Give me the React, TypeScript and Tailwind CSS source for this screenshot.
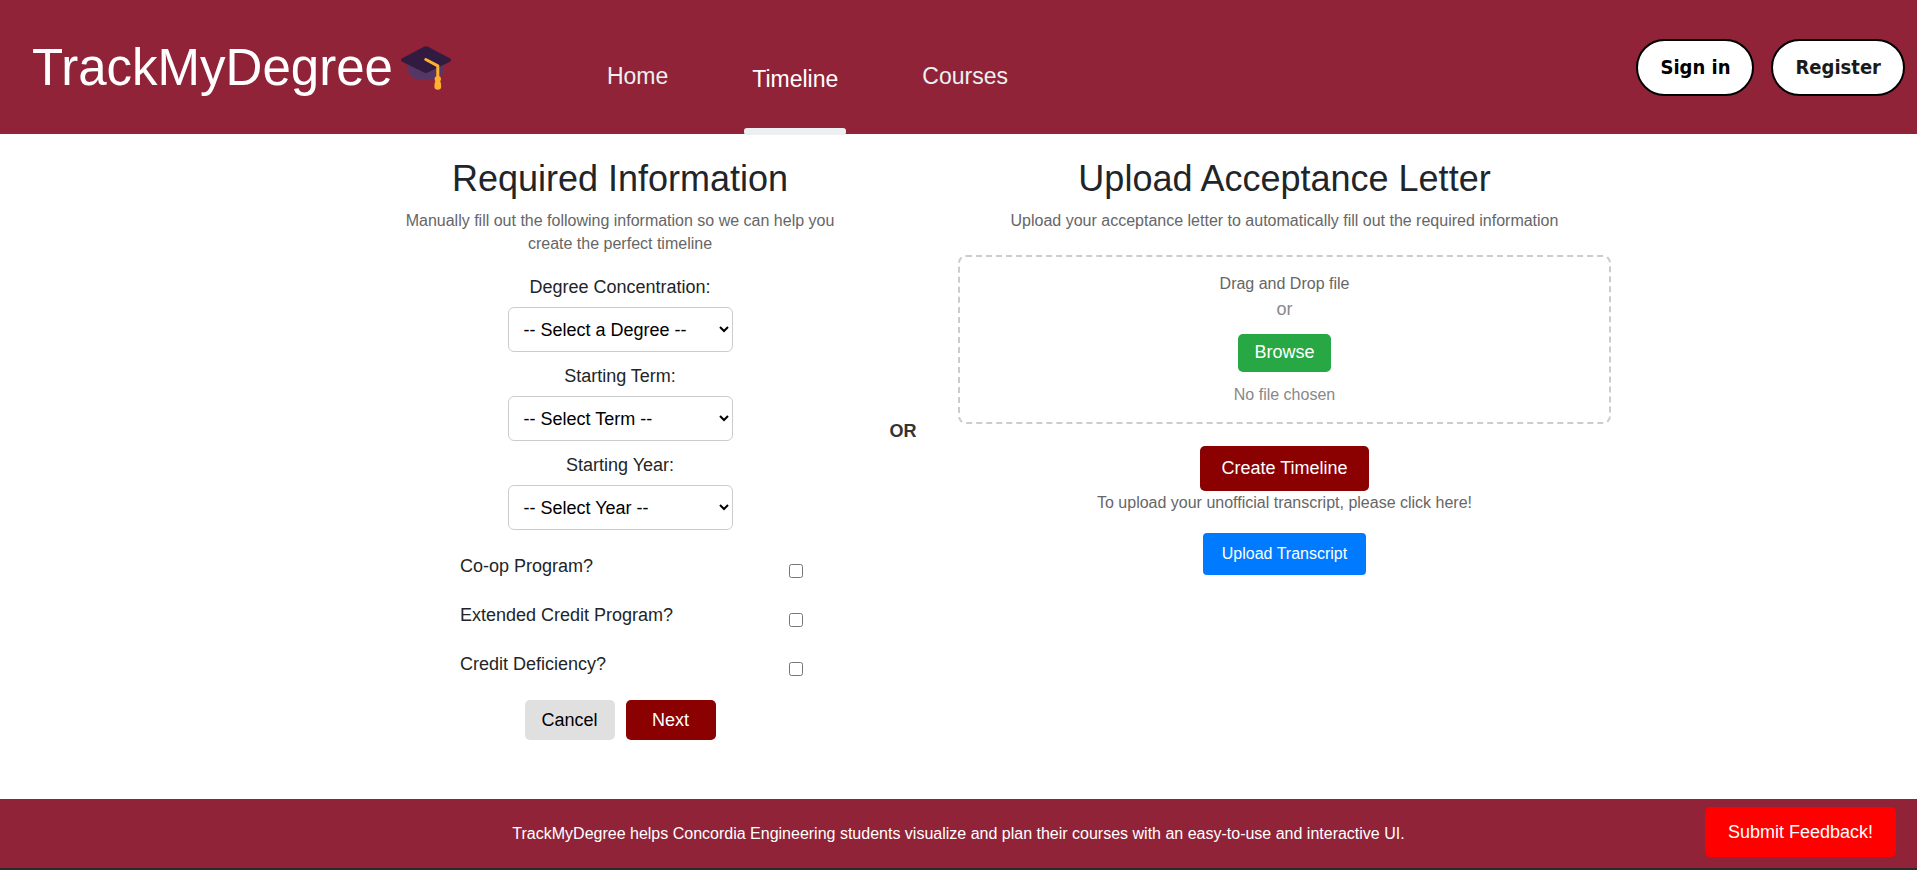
import { useRef, useState } from "react";

function GraduationCap() {
  return (
    <svg viewBox="0 0 50 44" className="mt-0.5 h-11 w-[50px]" aria-hidden="true">
      <path d="M7 17h36v5c0 6-4 11-11 11H18C11 33 7 28 7 22z" fill="#553766" />
      <path
        d="M23 .8a5 5 0 0 1 4 0l21.8 11.5c1.6.9 1.6 2.5 0 3.4L27 26.6a5 5 0 0 1-4 0L1.200 15.700c-1.600-.9-1.600-2.500 0-3.400z"
        fill="#321B41"
      />
      <path
        d="M24.800 13.500 36.800 19.800V33"
        fill="none"
        stroke="#FFB02E"
        strokeWidth="3"
        strokeLinecap="round"
        strokeLinejoin="round"
      />
      <path
        d="M36.800 30c2 0 3.200 1.200 3.200 3 0 1-.3 1.700-.8 2.300.7 1.300 1 3.200 1 5.200 0 2.200-1.200 3.300-3.400 3.300s-3.400-1.100-3.400-3.300c0-2 .3-3.900 1-5.200-.5-.6-.8-1.300-.8-2.300 0-1.800 1.200-3 3.200-3z"
        fill="#FFB02E"
      />
    </svg>
  );
}

function Header() {
  return (
    <header className="flex h-[134px] items-center justify-between bg-[#912338] pl-8 pr-3">
      <div className="flex h-full items-center">
        <a href="#" className="flex items-center gap-2 text-[51px] leading-none text-white">
          TrackMyDegree
          <GraduationCap />
        </a>
        <nav className="ml-[148px] flex h-full items-stretch gap-[68px] text-[23px] leading-[34px] text-[#ecf0f1]">
          <a href="#home" className="mt-[59px] px-2">
            Home
          </a>
          <a
            href="#timeline"
            aria-current="page"
            className="relative mt-[62px] px-2 text-white after:absolute after:inset-x-0 after:-bottom-px after:h-[7px] after:rounded-[3px] after:bg-[#ecf0f1]"
          >
            Timeline
          </a>
          <a href="#courses" className="mt-[59px] px-2">
            Courses
          </a>
        </nav>
      </div>
      <div className="flex gap-[17px] font-['DejaVu_Sans_Condensed','DejaVu_Sans',sans-serif] text-[20px] font-bold">
        <button className="h-[57px] rounded-full border-2 border-black bg-white px-[22px] text-black">
          Sign in
        </button>
        <button className="h-[57px] rounded-full border-2 border-black bg-white px-[22px] text-[#1a1a1a]">
          Register
        </button>
      </div>
    </header>
  );
}

const selects = [
  { id: "degree", label: "Degree Concentration:", placeholder: "-- Select a Degree --", options: ["Software Engineering", "Computer Engineering"] },
  { id: "term", label: "Starting Term:", placeholder: "-- Select Term --", options: ["Fall", "Winter", "Summer"] },
  { id: "year", label: "Starting Year:", placeholder: "-- Select Year --", options: ["2023", "2024", "2025"] },
];

const checks = [
  { id: "coop", label: "Co-op Program?" },
  { id: "extended", label: "Extended Credit Program?" },
  { id: "deficiency", label: "Credit Deficiency?" },
];

function RequiredInformation() {
  return (
    <section className="w-[448px] text-center">
      <h2 className="text-[36px] leading-[44px]">Required Information</h2>
      <p className="mt-2 text-base leading-[23px] text-[#666]">
        Manually fill out the following information so we can help you create the perfect timeline
      </p>
      <form onSubmit={(e) => e.preventDefault()}>
        <div className="mt-[22px] flex flex-col gap-[14px]">
          {selects.map((s) => (
            <div key={s.id} className="flex flex-col items-center gap-[10px]">
              <label htmlFor={s.id} className="text-[18px] leading-5">
                {s.label}
              </label>
              <select
                id={s.id}
                className="h-[45px] w-[225px] rounded-md border border-[#ccc] bg-white px-[11px] text-[18px] text-black"
              >
                <option value="">{s.placeholder}</option>
                {s.options.map((o) => (
                  <option key={o}>{o}</option>
                ))}
              </select>
            </div>
          ))}
        </div>
        <div className="mt-6 flex flex-col gap-[25px] pl-16 pr-[41px]">
          {checks.map((c) => (
            <div key={c.id} className="flex items-end justify-between">
              <label htmlFor={c.id} className="text-[18px] leading-6">
                {c.label}
              </label>
              <input id={c.id} type="checkbox" className="size-[14px]" />
            </div>
          ))}
        </div>
        <div className="mt-6 flex justify-center gap-[11px] text-[18px]">
          <button type="button" className="h-10 w-[90px] rounded-[5px] bg-[#e0e0e0] text-black">
            Cancel
          </button>
          <button type="submit" className="h-10 w-[90px] rounded-[5px] bg-[#8b0000] text-white">
            Next
          </button>
        </div>
      </form>
    </section>
  );
}

function UploadLetter() {
  const picker = useRef<HTMLInputElement>(null);
  const [fileName, setFileName] = useState("No file chosen");
  return (
    <section className="flex flex-1 flex-col items-center text-center">
      <h2 className="text-[36px] leading-[44px]">Upload Acceptance Letter</h2>
      <p className="mt-2 text-base leading-[23px] text-[#666]">
        Upload your acceptance letter to automatically fill out the required information
      </p>
      <div className="mt-[23px] flex w-full flex-col items-center rounded-lg border-2 border-dashed border-[#ccc] py-[15px]">
        <p className="text-base leading-6 text-[#666]">Drag and Drop file</p>
        <p className="text-[18px] leading-[26px] text-[#888]">or</p>
        <button
          type="button"
          onClick={() => picker.current?.click()}
          className="mt-3 h-[38px] rounded-[5px] bg-[#28a745] px-4 pb-0.5 text-[18px] text-white"
        >
          Browse
        </button>
        <input
          ref={picker}
          type="file"
          aria-label="Acceptance letter"
          className="hidden"
          onChange={(e) => setFileName(e.target.files?.[0]?.name ?? "No file chosen")}
        />
        <p className="mt-[11px] text-base leading-6 text-[#888]">{fileName}</p>
      </div>
      <button type="button" className="mt-[22px] h-[45px] w-[169px] rounded-[5px] bg-[#8b0000] text-[18px] text-white">
        Create Timeline
      </button>
      <p className="text-base leading-[23px] text-[#666]">
        To upload your unofficial transcript, please click here!
      </p>
      <button type="button" className="mt-[19px] h-[42px] w-[163px] rounded bg-[#007bff] text-base text-white">
        Upload Transcript
      </button>
    </section>
  );
}

export default function App() {
  return (
    <div className="flex min-h-screen flex-col bg-white font-['Liberation_Sans',Arial,sans-serif] text-[#212529]">
      <Header />
      <main className="mx-auto flex w-full max-w-[1305px] flex-1 pl-[90px] pt-[23px]">
        <RequiredInformation />
        <div className="mt-[262px] w-[114px] pl-1 text-center text-[18px] font-bold leading-6 text-[#333]">OR</div>
        <UploadLetter />
      </main>
      <footer className="relative flex h-[71px] items-center justify-center border-b-2 border-[#2b2b2b] bg-[#912338] text-white">
        <p className="text-base">
          TrackMyDegree helps Concordia Engineering students visualize and plan their courses with an easy-to-use and
          interactive UI.
        </p>
        <button
          type="button"
          className="absolute right-[21px] top-2 h-[50px] w-[191px] rounded-[5px] bg-[#ff0000] text-[18px]"
        >
          Submit Feedback!
        </button>
      </footer>
    </div>
  );
}
